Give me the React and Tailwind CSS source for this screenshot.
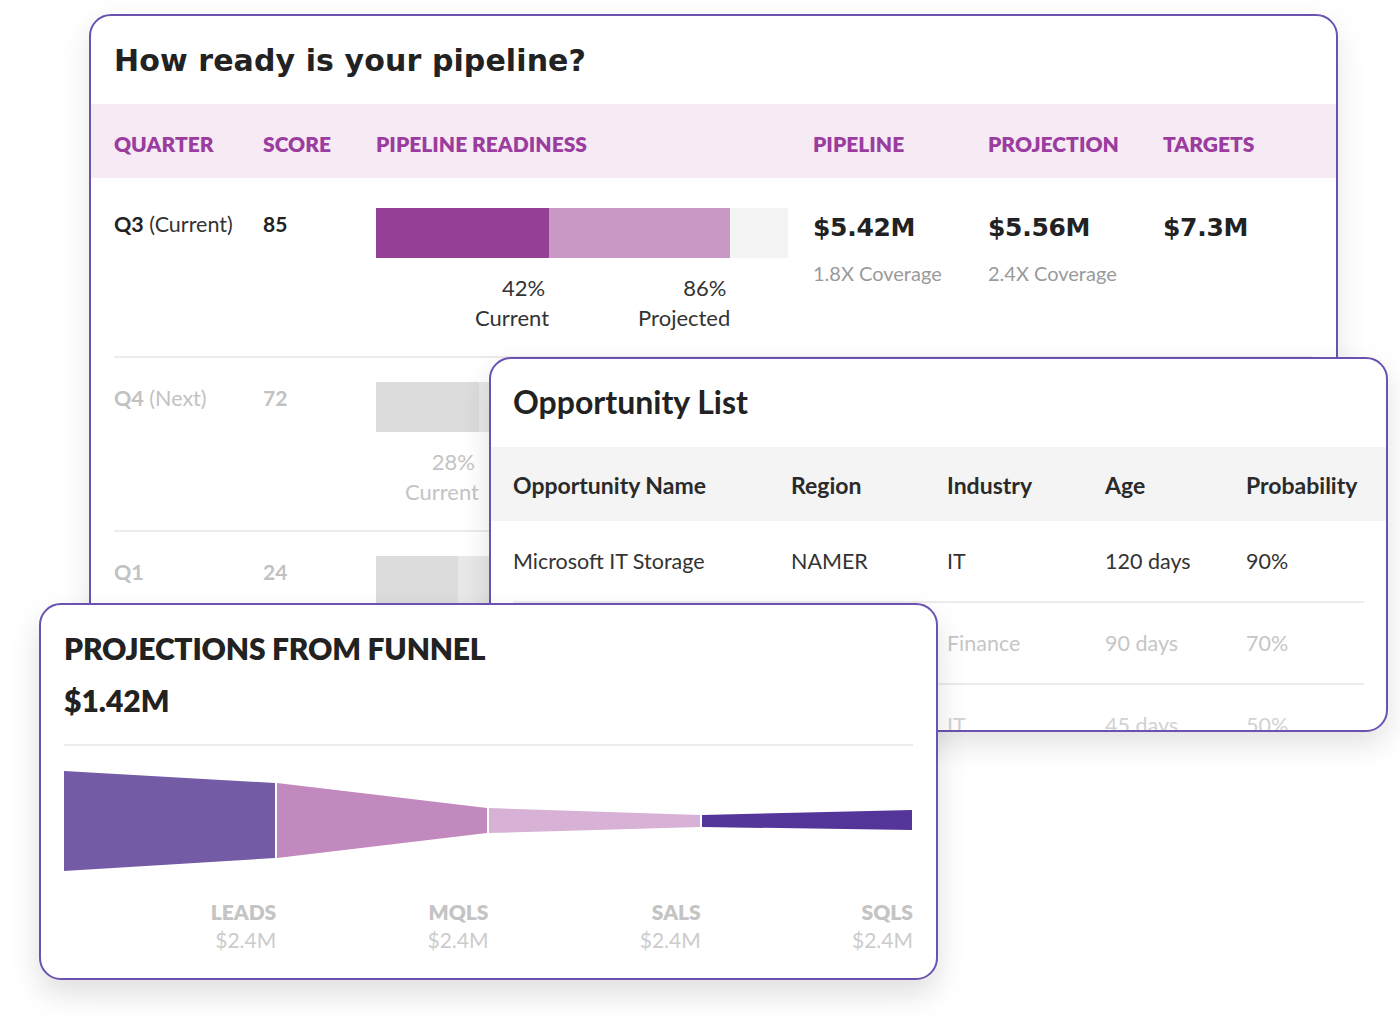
const body = { fontFamily: '"Lato", "Open Sans", sans-serif' };
const display = { fontFamily: '"DejaVu Sans", "Inter", sans-serif' };

const quarters = [
  {
    q: "Q3", tag: "(Current)", score: 85, active: true,
    bars: [42, 86], labels: [["42%", "Current"], ["86%", "Projected"]],
    pipeline: "$5.42M", pipeCov: "1.8X Coverage",
    projection: "$5.56M", projCov: "2.4X Coverage",
    target: "$7.3M",
  },
  {
    q: "Q4", tag: "(Next)", score: 72,
    bars: [25, 61], labels: [["28%", "Current"]],
    pipeline: "$3.10M", pipeCov: "1.2X Coverage",
    projection: "$4.02M", projCov: "1.6X Coverage",
    target: "$6.8M",
  },
  {
    q: "Q1", tag: "", score: 24,
    bars: [20, 38], labels: [["12%", "Current"]],
    pipeline: "$1.05M", pipeCov: "0.4X Coverage",
    projection: "$1.90M", projCov: "0.7X Coverage",
    target: "$7.0M",
  },
];

const opportunities = [
  { name: "Microsoft IT Storage", region: "NAMER", industry: "IT", age: "120 days", prob: "90%", tone: "text-[#333333]" },
  { name: "Barclays Data Platform", region: "EMEA", industry: "Finance", age: "90 days", prob: "70%", tone: "text-[#c6c6c6]" },
  { name: "Infosys Cloud Suite", region: "APAC", industry: "IT", age: "45 days", prob: "50%", tone: "text-[#d2d2d2]" },
];

const stages = [
  { name: "LEADS", value: "$2.4M" },
  { name: "MQLS", value: "$2.4M" },
  { name: "SALS", value: "$2.4M" },
  { name: "SQLS", value: "$2.4M" },
];

const pipeCols = "grid grid-cols-[149px_113px_437px_175px_175px_1fr]";
const oppCols = "grid grid-cols-[278px_156px_158px_141px_1fr]";

function ReadinessBar({ row }) {
  const [cur, proj] = row.bars;
  const strong = row.active ? "bg-[#963f96]" : "bg-[#dcdcdc]";
  const soft = row.active ? "bg-[#c799c4]" : "bg-[#e8e8e8]";
  const widths = [cur, proj - cur];
  return (
    <div>
      <div className="flex h-[50px] w-[412px] bg-[#f4f4f4]">
        <div className={strong} style={{ width: `${cur}%` }} />
        <div className={soft} style={{ width: `${proj - cur}%` }} />
      </div>
      <div className={`mt-[15px] flex w-[412px] text-[22px] leading-[30px] ${row.active ? "text-[#333333]" : "text-[#c4c4c4]"}`}>
        {row.labels.map(([pct, label], i) => (
          <div key={label} className="text-right" style={{ width: `${widths[i]}%` }}>
            <div className="pr-[4px]">{pct}</div>
            <div>{label}</div>
          </div>
        ))}
      </div>
    </div>
  );
}

function Money({ value, ink }) {
  return (
    <div className={`text-[25px] font-bold leading-[40px] tracking-[-0.3px] ${ink}`} style={display}>
      {value}
    </div>
  );
}

function PipelineCard() {
  return (
    <div className="absolute left-[89px] top-[14px] w-[1249px] h-[650px] overflow-hidden rounded-[22px] border-2 border-[#6b52b0] bg-white shadow-[0_10px_30px_rgba(0,0,0,0.10)]" style={body}>
      <div className="flex h-[88px] items-center pl-[23px]">
        <h1 className="text-[30px] font-bold tracking-[0.1px] text-[#222222]" style={display}>How ready is your pipeline?</h1>
      </div>
      <div className={`${pipeCols} h-[74px] items-center bg-[#f6ebf5] px-[23px] pt-[5px] text-[21px] font-extrabold text-[#9b3d9e]`}>
        <div>QUARTER</div>
        <div>SCORE</div>
        <div>PIPELINE READINESS</div>
        <div>PIPELINE</div>
        <div>PROJECTION</div>
        <div>TARGETS</div>
      </div>
      {quarters.map((row, i) => {
        const ink = row.active ? "text-[#222222]" : "text-[#c2c2c2]";
        return (
          <div key={row.q} className={`${pipeCols} mx-[23px] items-start border-b-2 border-[#ececec] pb-[23px] ${i === 0 ? "pt-[30px]" : "pt-[24px]"}`}>
            <div className={`text-[21.5px] leading-[32px] ${ink}`}>
              <span className="font-bold">{row.q}</span>{" "}
              <span className={row.active ? "text-[#333333]" : ""}>{row.tag}</span>
            </div>
            <div className={`text-[21px] font-bold leading-[32px] ${ink}`}>{row.score}</div>
            <ReadinessBar row={row} />
            <div>
              <Money value={row.pipeline} ink={ink} />
              <div className="mt-[12px] text-[20px] leading-[26px] text-[#9a9a9a]">{row.pipeCov}</div>
            </div>
            <div>
              <Money value={row.projection} ink={ink} />
              <div className="mt-[12px] text-[20px] leading-[26px] text-[#9a9a9a]">{row.projCov}</div>
            </div>
            <Money value={row.target} ink={ink} />
          </div>
        );
      })}
    </div>
  );
}

function OpportunityCard() {
  return (
    <div className="absolute left-[489px] top-[357px] w-[899px] h-[375px] overflow-hidden rounded-[22px] border-2 border-[#6b52b0] bg-white shadow-[0_12px_30px_rgba(0,0,0,0.12)]" style={body}>
      <div className="flex h-[86px] items-center pl-[22px]">
        <h2 className="text-[32px] font-bold text-[#222222]">Opportunity List</h2>
      </div>
      <div className={`${oppCols} mt-[2px] h-[74px] items-center bg-[#f4f4f4] px-[22px] pt-[3px] text-[23px] font-bold text-[#2a2a2a]`}>
        <div>Opportunity Name</div>
        <div>Region</div>
        <div>Industry</div>
        <div>Age</div>
        <div>Probability</div>
      </div>
      {opportunities.map((o) => (
        <div key={o.name} className={`${oppCols} mx-[22px] h-[82px] items-center border-b-2 border-[#ececec] text-[21.5px] ${o.tone}`}>
          <div>{o.name}</div>
          <div>{o.region}</div>
          <div>{o.industry}</div>
          <div>{o.age}</div>
          <div>{o.prob}</div>
        </div>
      ))}
    </div>
  );
}

function Funnel() {
  return (
    <svg width="848" height="100" viewBox="0 0 848 100" className="block">
      <polygon points="0,0 211,12 211,87 0,100" fill="#745ba6" />
      <polygon points="213,12 423,37 423,62 213,87" fill="#c289be" />
      <polygon points="425,37 636,44 636,56 425,62" fill="#d7b1d6" />
      <polygon points="638,44 848,39 848,59 638,56" fill="#54359a" />
    </svg>
  );
}

function FunnelCard() {
  return (
    <div className="absolute left-[39px] top-[603px] w-[899px] h-[377px] rounded-[22px] border-2 border-[#6b52b0] bg-white px-[23px] shadow-[0_14px_30px_rgba(0,0,0,0.13)]" style={body}>
      <h2 className="pt-[23px] text-[30px] font-extrabold leading-[40px] tracking-[-0.2px] text-[#222222]">PROJECTIONS FROM FUNNEL</h2>
      <div className="mt-[12px] text-[30px] font-extrabold leading-[40px] text-[#222222]">$1.42M</div>
      <div className="mt-[24px] h-[2px] bg-[#ececec]" />
      <div className="mt-[25px]">
        <Funnel />
      </div>
      <div className="mt-[28px] grid grid-cols-4 text-right">
        {stages.map((s) => (
          <div key={s.name}>
            <div className="text-[21px] font-extrabold leading-[26px] text-[#c4c4c4]">{s.name}</div>
            <div className="text-[21px] leading-[30px] text-[#cccccc]">{s.value}</div>
          </div>
        ))}
      </div>
    </div>
  );
}

export default function App() {
  return (
    <div className="relative h-[1017px] w-[1400px] overflow-hidden bg-white">
      <PipelineCard />
      <OpportunityCard />
      <FunnelCard />
    </div>
  );
}
